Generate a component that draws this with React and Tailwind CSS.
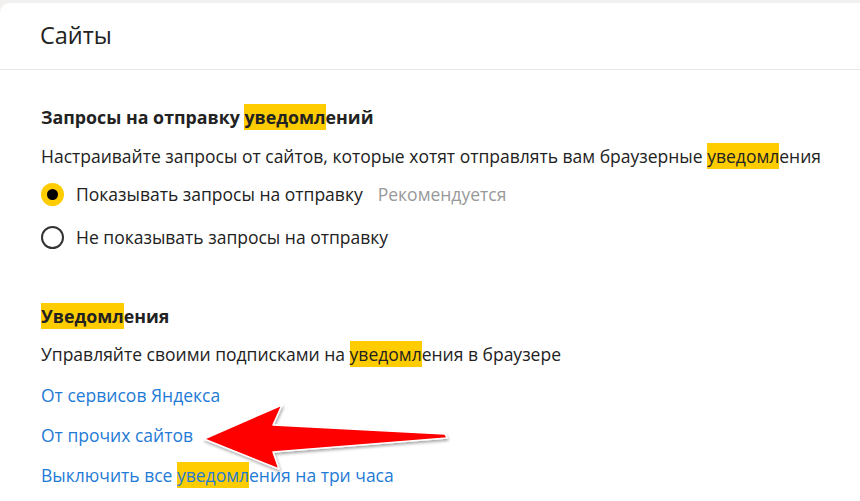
import React from "react";

const Mark = ({ children }) => (
  <span className="bg-[#ffcc00] py-[1px]">{children}</span>
);

const Radio = ({ checked, label, hint }) => (
  <label className="flex items-center h-[43px] cursor-pointer">
    {checked ? (
      <span className="w-[23px] h-[23px] rounded-full bg-[#ffcc00] flex items-center justify-center">
        <span className="w-[11px] h-[11px] rounded-full bg-black" />
      </span>
    ) : (
      <span className="w-[23px] h-[23px] rounded-full border-2 border-[#333]" />
    )}
    <span className="ml-[12px] text-[#222]">{label}</span>
    {hint && <span className="ml-[15px] text-[#999]">{hint}</span>}
  </label>
);

export default function App() {
  return (
    <div
      className="relative w-[860px] h-[501px] overflow-hidden bg-[#f2f1ef] pt-[3px]"
      style={{ fontFamily: '"Open Sans", "Noto Sans", sans-serif' }}
    >
      <div className="bg-white rounded-tl-[10px] h-full">
        {/* header */}
        <div className="h-[67px] border-b border-[#e6e6e6] flex items-center px-[40px]">
          <h1 className="text-[23.5px] text-[#222] leading-none">Сайты</h1>
        </div>

        <div className="px-[41px] text-[17.5px] text-[#222]">
          {/* requests */}
          <h2 className="mt-[34px] h-[27px] flex items-center text-[17.8px] font-bold">
            <span>
              Запросы на отправку <Mark>уведомл</Mark>ений
            </span>
          </h2>
          <p className="mt-[13px] h-[25px] flex items-center whitespace-nowrap">
            <span>
              Настраивайте запросы от сайтов, которые хотят отправлять вам
              браузерные <Mark>уведомл</Mark>ения
            </span>
          </p>
          <div className="mt-[4px] flex flex-col">
            <Radio checked label="Показывать запросы на отправку" hint="Рекомендуется" />
            <Radio label="Не показывать запросы на отправку" />
          </div>

          {/* notifications */}
          <h2 className="mt-[44px] h-[27px] flex items-center text-[17.8px] font-bold">
            <span>
              <Mark>Уведомл</Mark>ения
            </span>
          </h2>
          <p className="mt-[12px] h-[25px] flex items-center">
            <span>
              Управляйте своими подписками на <Mark>уведомл</Mark>ения в браузере
            </span>
          </p>
          <div className="mt-[8px] flex flex-col text-[#1f7bd6]">
            <a className="h-[40px] flex items-center">От сервисов Яндекса</a>
            <a className="h-[40px] flex items-center">От прочих сайтов</a>
            <a className="h-[40px] flex items-center">
              <span>
                Выключить все <Mark>уведомл</Mark>ения на три часа
              </span>
            </a>
          </div>
        </div>
      </div>

      {/* red annotation arrow */}
      <svg
        className="absolute left-0 top-0 pointer-events-none"
        width="860"
        height="501"
        viewBox="0 0 860 501"
      >
        <defs>
          <filter id="sh" x="-10%" y="-20%" width="130%" height="150%">
            <feDropShadow dx="1" dy="2" stdDeviation="1.5" floodColor="#000" floodOpacity="0.35" />
          </filter>
        </defs>
        <polygon
          points="204,439 282,405 273,425 445,434 447,438 273,452 279,469"
          fill="#ff0000"
          stroke="#fff"
          strokeWidth="1.5"
          strokeLinejoin="round"
          filter="url(#sh)"
        />
      </svg>
    </div>
  );
}
